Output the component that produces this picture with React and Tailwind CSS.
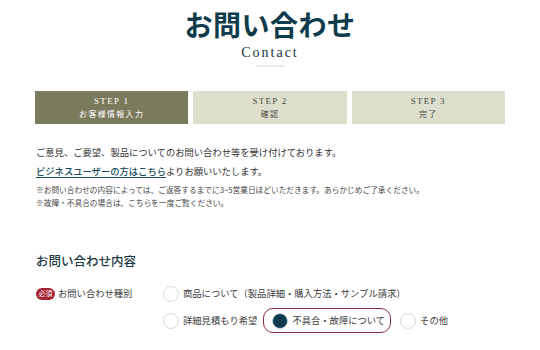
import React from "react";

const jp = { fontFamily: '"Noto Sans CJK JP", "Noto Sans", sans-serif' };
const serif = { fontFamily: '"Liberation Serif", "Noto Sans CJK JP", serif' };

function Radio({ label, checked }) {
  return (
    <label
      className={`flex items-center h-[25px] pl-[8px] pr-[5px] rounded-[10px] border-[1.5px] ${
        checked ? "border-[#8d2b3f]" : "border-transparent"
      }`}
    >
      <span
        className={`w-[16px] h-[16px] rounded-full border shrink-0 ${
          checked ? "bg-[#0d3a4f] border-[#c9d3d8]" : "bg-white border-[#dadada]"
        }`}
      />
      <span className="ml-[4px] text-[9.3px] text-[#3c3c3c] whitespace-nowrap leading-none">{label}</span>
    </label>
  );
}

export default function App() {
  return (
    <div className="w-[540px] h-[350px] overflow-hidden bg-white" style={jp}>
      <div className="pt-[10px] flex flex-col items-center">
        <h1 className="text-[28px] leading-[28px] font-semibold text-[#0f3c4c] tracking-[0.5px]" style={jp}>
          お問い合わせ
        </h1>
        <div className="mt-[7px] text-[14px] leading-[16px] tracking-[2px] text-[#163642]" style={serif}>
          Contact
        </div>
        <div className="mt-[4px] w-[28px] h-[2px] bg-[#e8e8e8]" />
      </div>

      <div className="mx-[35px] mt-[24px] flex gap-[5px] h-[33px]">
        <div className="flex-1 bg-[#7a7a5d] flex flex-col items-center justify-center text-white">
          <div className="text-[9px] leading-[11px] tracking-[1.3px]" style={serif}>STEP 1</div>
          <div className="text-[8px] leading-[11px] tracking-[1.3px] mt-[1px]">お客様情報入力</div>
        </div>
        <div className="flex-1 bg-[#dddecb] flex flex-col items-center justify-center text-[#4a4a4a]">
          <div className="text-[9px] leading-[11px] tracking-[1.3px]" style={serif}>STEP 2</div>
          <div className="text-[8px] leading-[11px] tracking-[1.3px] mt-[1px]">確認</div>
        </div>
        <div className="flex-1 bg-[#dddecb] flex flex-col items-center justify-center text-[#4a4a4a]">
          <div className="text-[9px] leading-[11px] tracking-[1.3px]" style={serif}>STEP 3</div>
          <div className="text-[8px] leading-[11px] tracking-[1.3px] mt-[1px]">完了</div>
        </div>
      </div>

      <div className="mx-[36px] mt-[19px] text-[#333]">
        <p className="text-[9.3px] leading-[19px] whitespace-nowrap">
          ご意見、ご要望、製品についてのお問い合わせ等を受け付けております。
        </p>
        <p className="text-[9.3px] leading-[19px] whitespace-nowrap">
          <span className="text-[#174a5a] font-medium underline underline-offset-2">ビジネスユーザーの方はこちら</span>
          よりお願いいたします。
        </p>
        <p className="mt-[2px] text-[7.7px] leading-[13px] whitespace-nowrap text-[#444]">
          ※お問い合わせの内容によっては、ご返答するまでに3~5営業日ほどいただきます。あらかじめご了承ください。
        </p>
        <p className="text-[7.7px] leading-[13px] whitespace-nowrap text-[#444]">
          ※故障・不具合の場合は、こちらを一度ご覧ください。
        </p>

        <h2 className="mt-[42px] text-[12.5px] leading-[20px] font-medium text-[#1c3944]">お問い合わせ内容</h2>

        <div className="mt-[10px] flex">
          <div className="w-[118px] shrink-0 h-[25px] flex items-center">
            <span className="bg-[#a6202f] text-white text-[7px] leading-none rounded-[6px] px-[2.5px] py-[2.5px]">必須</span>
            <span className="ml-[3px] text-[9.3px] text-[#3c3c3c] leading-none">お問い合わせ種別</span>
          </div>
          <div className="flex flex-col gap-[2px]">
            <div className="flex">
              <Radio label="商品について（製品詳細・購入方法・サンプル請求）" />
            </div>
            <div className="flex">
              <Radio label="詳細見積もり希望" />
              <Radio label="不具合・故障について" checked />
              <Radio label="その他" />
            </div>
          </div>
        </div>
      </div>
    </div>
  );
}
